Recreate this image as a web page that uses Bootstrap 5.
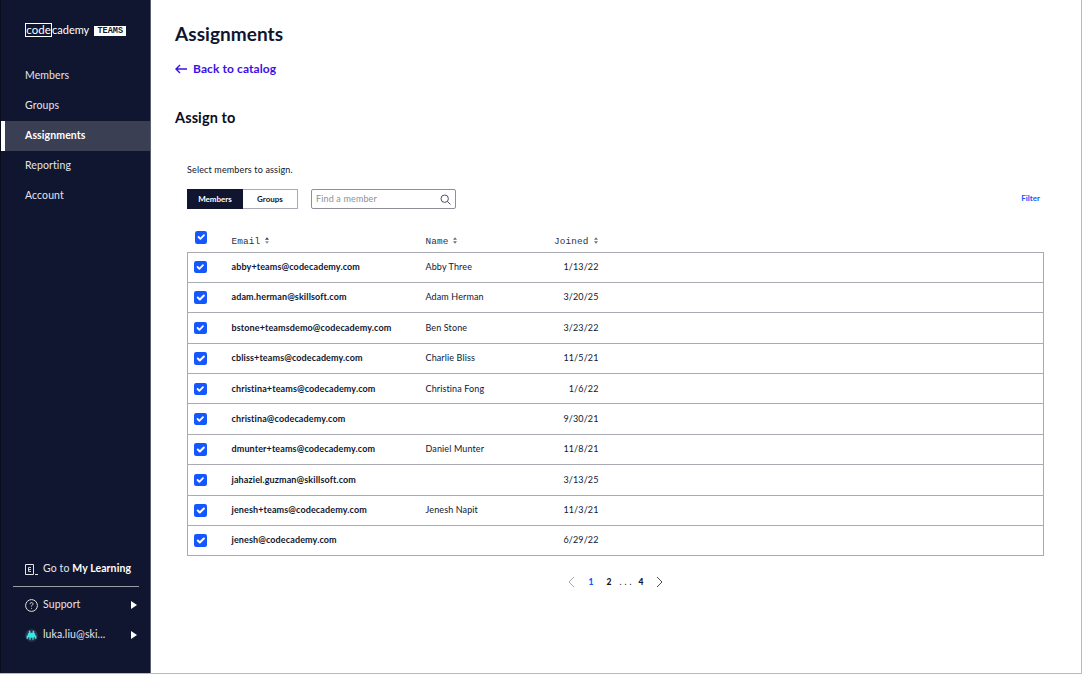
<!doctype html>
<html lang="en"><head><meta charset="utf-8"><title>Assignments</title>
<link href="https://cdn.jsdelivr.net/npm/bootstrap@5.3.0/dist/css/bootstrap.min.css" rel="stylesheet">
<style>
html,body{height:674px;overflow:hidden}
body{font-family:Lato,"Liberation Sans",sans-serif;color:#10162f;background:#fff}
.shell{height:674px;border-right:1px solid #b9b9c0;border-bottom:1px solid #b9b9c0}
.side{width:151px;background:#10162f;color:#e4e5ea;font-size:10.5px;letter-spacing:.1px;border-left:1px solid #0a0d1c;border-right:1px solid #5b5f70}
.logo{height:13px;margin:23px 0 0 24px;color:#fff;font-size:11px;line-height:13px;letter-spacing:0;white-space:nowrap}
.logo-box{border:1px solid #fff;height:14px;width:27px;line-height:12px;text-align:center;flex-shrink:0;font-size:11.5px}
.logo-tag{background:#fff;color:#10162f;font:700 8.5px/10px "Liberation Mono",monospace;margin:2px 0 0 5px;height:10px;width:32px;flex-shrink:0}
.side-nav{margin-top:25px}
.side-link{height:30px;padding-left:24px;color:#e4e5ea;text-decoration:none;display:flex;align-items:center}
.side-link.on{background:#3a3f54;color:#fff;font-weight:700;border-left:4px solid #fff;padding-left:20px}
.side-foot{padding-bottom:23px}
.foot-row{height:30px;padding:0 13px 0 24px;white-space:nowrap;gap:5px}
.foot-rule{height:1px;background:#9a9ca8;margin:2px 11px 3px 12px}
.tri{width:0;height:0;border-left:6px solid #fff;border-top:4px solid transparent;border-bottom:4px solid transparent}
.page-main{padding:0 37px 0 24px;min-width:0}
.ttl{font-size:19px;font-weight:700;line-height:24px;margin:22px 0 0;letter-spacing:.05px}
.back{color:#3a10e5;font-size:12px;font-weight:700;text-decoration:none;margin-top:15px;height:16px;letter-spacing:.1px;gap:6px}
.sub{font-size:14.5px;font-weight:700;line-height:20px;margin:31px 0 0;color:#0a0d1c;letter-spacing:.1px}
.panel{padding-left:12px}
.hint{font-size:9px;margin:36px 0 0;line-height:12px;letter-spacing:.15px}
.tools{margin-top:13px;height:20px}
.seg{width:111px;height:20px;border:1px solid #a9aab4;font-size:8px;font-weight:700}
.seg span{display:flex;align-items:center;justify-content:center}
.seg .a{width:56px;background:#10162f;color:#fff;margin:-1px 0 -1px -1px}
.seg .b{flex:1}
.finder{width:145px;height:20px;border:1px solid #8d8f9b;border-radius:2px;margin-left:13px;padding:0 4px;font-size:9px;color:#8d8f9b;letter-spacing:.15px}
.filt{color:#1557ff;font-size:8px;font-weight:700;text-decoration:none;margin:-2px 4px 0 0}
.grid-tbl{width:857px;table-layout:fixed;border-collapse:collapse;margin:20px 0 0;font-size:9px;letter-spacing:.12px}
.grid-tbl thead th{font:400 9.4px/12px "Liberation Mono",monospace;color:#2b3047;padding:0 0 4px;height:23px;vertical-align:bottom}
.grid-tbl thead th.num{padding-right:2px}
.grid-tbl tbody tr{height:30.4px}
.grid-tbl tbody td{border-top:1px solid #a9aab4;border-bottom:1px solid #a9aab4;padding:0 0 1px;vertical-align:middle}
.grid-tbl tbody td.num{padding-right:1px}
.grid-tbl tbody td:first-child{border-left:1px solid #a9aab4;padding-bottom:0}
.grid-tbl tbody td:last-child{border-right:1px solid #a9aab4}
.mail{font-weight:700;color:#10162f}
.num{text-align:right}
.tick{width:12.5px;height:12.5px;margin:0 0 0 6px;display:block;border-radius:2px;background-color:#1557ff;border:0;opacity:1}
.tick:checked{background-color:#1557ff;border-color:#1557ff}
thead .tick{margin-left:7px;position:relative;top:-4px}
.sorter{display:inline-block;width:4px;height:7px;margin-left:5px;vertical-align:0}
.pager{margin-top:19px;width:857px;font-size:8.5px;font-weight:900;height:14px;color:#10162f}
.pager .cur{color:#1557ff}
.pager .dots{font-weight:400;letter-spacing:3px}
.pgn-step{margin-left:13px}
.pgn-wide{margin-left:14px}
</style></head><body>
<div class="shell d-flex">
<aside class="side d-flex flex-column flex-shrink-0">
 <div class="logo d-flex align-items-center">
  <span class="logo-box">code</span><span>cademy</span><span class="logo-tag text-center">TEAMS</span>
 </div>
 <nav class="side-nav">
  <a class="side-link" href="#">Members</a>
  <a class="side-link" href="#">Groups</a>
  <a class="side-link on" href="#">Assignments</a>
  <a class="side-link" href="#">Reporting</a>
  <a class="side-link" href="#">Account</a>
 </nav>
 <div class="side-foot mt-auto">
  <div class="foot-row d-flex align-items-center">
   <svg class="flex-shrink-0" width="13" height="13" viewBox="0 0 13 13" fill="none" stroke="#e4e5ea"><path d="M.5 1.500h8v10h-8z"/><path d="M6 4.500H3.500v4H6M3.500 6.500H6" stroke-width=".9"/><path d="M10 11.500h3" stroke-width="1"/></svg>
   <span>Go to <b class="text-white">My Learning</b></span>
  </div>
  <div class="foot-rule"></div>
  <div class="foot-row d-flex align-items-center">
   <svg width="13" height="13" viewBox="0 0 13 13" fill="none" stroke="#e4e5ea" class="flex-shrink-0"><circle cx="6.500" cy="6.500" r="5.900"/><path d="M5 5.100c0-2 3-2 3-.2 0 1.200-1.500 1.200-1.500 2.600" stroke-width=".9"/><circle cx="6.500" cy="9.300" r=".5" fill="#e4e5ea" stroke="none"/></svg>
   <span class="flex-grow-1">Support</span><span class="tri"></span>
  </div>
  <div class="foot-row d-flex align-items-center">
   <svg width="13" height="13" viewBox="0 0 12 12" class="flex-shrink-0"><circle cx="6" cy="6" r="6" fill="#2a2f4a"/><path fill="#37e8e0" d="M3.500 1.500h1.500v2h2v-2h1.500v2.500h1v2h1v3H9v-1.500H8V10H6.800V8H5.200v2H4V7.500H3V9H1.500V6h1V4h1z"/></svg>
   <span class="flex-grow-1">luka.liu@ski...</span><span class="tri"></span>
  </div>
 </div>
</aside>
<main class="page-main flex-grow-1 d-flex flex-column">
 <h1 class="ttl">Assignments</h1>
 <a class="back d-flex align-items-center" href="#"><svg width="12" height="10" viewBox="0 0 12 10" fill="none" stroke="#3a10e5" stroke-width="1.400"><path d="M12 5H1M5 1L1 5l4 4"/></svg>Back to catalog</a>
 <h2 class="sub">Assign to</h2>
 <section class="panel">
  <p class="hint">Select members to assign.</p>
  <div class="tools d-flex align-items-center">
   <div class="seg d-flex"><span class="a">Members</span><span class="b">Groups</span></div>
   <div class="finder d-flex align-items-center justify-content-between"><span>Find a member</span>
    <svg width="11" height="11" viewBox="0 0 11 11" fill="none" stroke="#4a4e60"><circle cx="4.700" cy="4.700" r="3.700"/><path d="M7.500 7.500l3 3"/></svg></div>
   <a class="filt ms-auto" href="#">Filter</a>
  </div>
  <table class="grid-tbl">
   <colgroup><col style="width:44px"><col style="width:194px"><col style="width:115px"><col style="width:59px"><col></colgroup>
   <thead><tr>
    <th><input class="form-check-input tick" type="checkbox" checked aria-label="All"></th>
    <th>Email<svg class="sorter" viewBox="0 0 5 8" fill="#3a3f54"><path d="M2.500 0L5 3H0z"/><path d="M2.500 8L0 5h5z" opacity=".6"/></svg></th>
    <th>Name<svg class="sorter" viewBox="0 0 5 8" fill="#6b6f80"><path d="M2.500 0L5 3H0z"/><path d="M2.500 8L0 5h5z"/></svg></th>
    <th class="num" style="white-space:nowrap">Joined<svg class="sorter" viewBox="0 0 5 8" fill="#6b6f80"><path d="M2.500 0L5 3H0z"/><path d="M2.500 8L0 5h5z"/></svg></th>
    <th></th>
   </tr></thead>
   <tbody>
    <tr><td><input class="form-check-input tick" type="checkbox" checked></td><td class="mail">abby+teams@codecademy.com</td><td>Abby Three</td><td class="num">1/13/22</td><td></td></tr>
    <tr><td><input class="form-check-input tick" type="checkbox" checked></td><td class="mail">adam.herman@skillsoft.com</td><td>Adam Herman</td><td class="num">3/20/25</td><td></td></tr>
    <tr><td><input class="form-check-input tick" type="checkbox" checked></td><td class="mail">bstone+teamsdemo@codecademy.com</td><td>Ben Stone</td><td class="num">3/23/22</td><td></td></tr>
    <tr><td><input class="form-check-input tick" type="checkbox" checked></td><td class="mail">cbliss+teams@codecademy.com</td><td>Charlie Bliss</td><td class="num">11/5/21</td><td></td></tr>
    <tr><td><input class="form-check-input tick" type="checkbox" checked></td><td class="mail">christina+teams@codecademy.com</td><td>Christina Fong</td><td class="num">1/6/22</td><td></td></tr>
    <tr><td><input class="form-check-input tick" type="checkbox" checked></td><td class="mail">christina@codecademy.com</td><td></td><td class="num">9/30/21</td><td></td></tr>
    <tr><td><input class="form-check-input tick" type="checkbox" checked></td><td class="mail">dmunter+teams@codecademy.com</td><td>Daniel Munter</td><td class="num">11/8/21</td><td></td></tr>
    <tr><td><input class="form-check-input tick" type="checkbox" checked></td><td class="mail">jahaziel.guzman@skillsoft.com</td><td></td><td class="num">3/13/25</td><td></td></tr>
    <tr><td><input class="form-check-input tick" type="checkbox" checked></td><td class="mail">jenesh+teams@codecademy.com</td><td>Jenesh Napit</td><td class="num">11/3/21</td><td></td></tr>
    <tr><td><input class="form-check-input tick" type="checkbox" checked></td><td class="mail">jenesh@codecademy.com</td><td></td><td class="num">6/29/22</td><td></td></tr>
   </tbody>
  </table>
  <div class="pager d-flex align-items-center justify-content-center">
   <svg width="7" height="12" viewBox="0 0 7 12" fill="none" stroke="#a9aab4"><path d="M6 1L1 6l5 5"/></svg>
   <span class="cur pgn-wide">1</span><span class="pgn-step">2</span><span class="dots ms-2">...</span><span class="ms-1">4</span>
   <svg class="pgn-step" width="7" height="12" viewBox="0 0 7 12" fill="none" stroke="#4a4e60"><path d="M1 1l5 5-5 5"/></svg>
  </div>
 </section>
</main>
</div>
<script src="https://cdn.jsdelivr.net/npm/bootstrap@5.3.0/dist/js/bootstrap.bundle.min.js"></script>
</body></html>
